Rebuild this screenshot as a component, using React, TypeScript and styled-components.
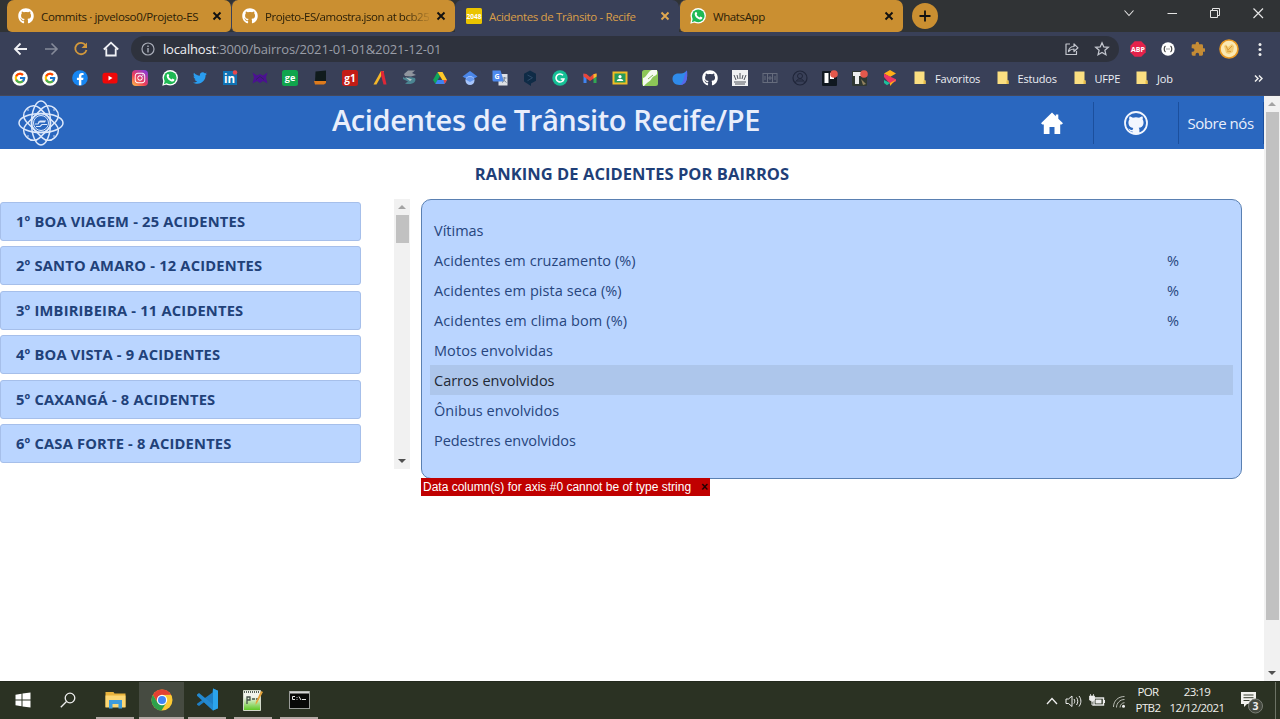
import React from "react";
import styled, { createGlobalStyle, css } from "styled-components";
import { FcGoogle } from "react-icons/fc";
import { FaGithub, FaTwitter, FaInstagram, FaFacebookF } from "react-icons/fa";

const ui = `"Open Sans", "Noto Sans", sans-serif`;
const amber = "#ca8f31";
const navy = "#394058";

const GlobalStyle = createGlobalStyle`
  * { box-sizing: border-box; }
  body { margin: 0; font-family: ${ui}; background: #fff; overflow: hidden; }
  svg { display: block; flex: none; }
`;

const Screen = styled.div`
  width: 1280px;
  height: 719px;
  display: flex;
  flex-direction: column;
  overflow: hidden;
`;

const Text = styled.span<{ $ls?: number }>`
  white-space: nowrap;
  letter-spacing: ${(p) => p.$ls ?? 0}px;
`;

/* ---------- browser chrome ---------- */

const TabStrip = styled.div`
  height: 32px;
  flex: none;
  display: flex;
  background: #303335;
  padding-left: 7px;
`;

const Tab = styled.div<{ $active?: boolean }>`
  width: 224px;
  height: 32px;
  padding: 0 9px 0 11px;
  display: flex;
  align-items: center;
  gap: 7px;
  font-size: 11.5px;
  border-radius: 7px 7px ${(p) => (p.$active ? "0 0" : "5px 5px")};
  background: ${(p) => (p.$active ? navy : amber)};
  color: ${(p) => (p.$active ? "#d99f49" : "#2b2008")};
  & + & { border-left: 1px solid ${(p) => (p.$active ? navy : "#a87526")}; padding-left: 10px; }
  svg:last-child { color: ${(p) => (p.$active ? "#e0a850" : "#111")}; }
`;

const TabTitle = styled(Text)<{ $fade?: boolean }>`
  flex: 1;
  min-width: 0;
  overflow: hidden;
  ${(p) => p.$fade && css`mask-image: linear-gradient(90deg, #000 85%, transparent 102%);`}
`;

const NewTab = styled.div`
  width: 26px;
  height: 26px;
  margin: 3px 0 0 9px;
  border-radius: 50%;
  background: ${amber};
  display: grid;
  place-items: center;
`;

const WindowButtons = styled.div`
  margin-left: auto;
  padding: 6px 15px 0 0;
  display: flex;
  gap: 29px;
  color: #e4e4e4;
  height: 21px;
`;

const Toolbar = styled.div`
  height: 33px;
  flex: none;
  background: ${navy};
  display: flex;
  align-items: center;
  padding: 1px 12px 0 13px;
`;

const NavIcons = styled.div`
  display: flex;
  gap: 14px;
  width: 118px;
`;

const Address = styled.div`
  width: 988px;
  height: 26px;
  border-radius: 13px;
  background: #2e323d;
  display: flex;
  align-items: center;
  padding: 0 9px 0 10px;
  color: #9a9ea8;
  font-size: 13px;
  b { font-weight: 400; color: #eef0f4; }
`;

const Url = styled(Text)`
  margin-left: 8px;
`;

const AddressIcons = styled.div`
  margin-left: auto;
  display: flex;
  gap: 14px;
  color: #c3c6ce;
`;

const Extensions = styled.div`
  margin-left: auto;
  display: flex;
  align-items: center;
  gap: 13.5px;
  padding-left: 1px;
`;

const Bookmarks = styled.div`
  height: 31px;
  flex: none;
  background: ${navy};
  border-bottom: 1px solid #45485a;
  display: flex;
  align-items: center;
  padding: 0 17px 4px 12px;
  gap: 14px;
`;

const BookmarkSlot = styled.div`
  width: 16px;
  height: 16px;
  flex: none;
  display: grid;
  place-items: center;
`;

const Folder = styled.div<{ $w: number }>`
  width: ${(p) => p.$w}px;
  flex: none;
  display: flex;
  align-items: center;
  gap: 9px;
  color: #eceef4;
  font-size: 11px;
`;

const Folders = styled.div`
  display: flex;
  padding-left: 2px;
  flex: 1;
`;

/* ---------- page ---------- */

const Viewport = styled.div`
  flex: 1;
  display: flex;
  min-height: 0;
`;

const Page = styled.main`
  width: 1264px;
  background: #fff;
`;

const Header = styled.header`
  height: 53px;
  background: #2a67bf;
  color: #e9eefb;
  display: flex;
  align-items: center;
`;

const LogoSlot = styled.div`
  width: 82px;
  padding-left: 18px;
`;

const Title = styled.h1`
  margin: 0 0 5px;
  width: 928px;
  text-align: center;
  font-size: 29px;
  line-height: 40px;
  font-weight: 650;
  letter-spacing: -0.4px;
  white-space: nowrap;
`;

const NavCell = styled.div<{ $w: number }>`
  width: ${(p) => p.$w}px;
  height: 42px;
  flex: none;
  display: flex;
  align-items: center;
  justify-content: center;
  border-right: 1px solid #1b4f9d;
  font-size: 15px;
  span { padding-right: 1px; }
`;

const Heading = styled.h2`
  margin: 0;
  height: 50px;
  line-height: 49px;
  text-align: center;
  font-size: 16.5px;
  font-weight: 700;
  color: #1f3f78;
  letter-spacing: 0.06px;
`;

const Content = styled.div`
  display: flex;
  align-items: flex-start;
`;

const List = styled.div`
  width: 394px;
  height: 269px;
  padding-top: 3px;
  display: flex;
  flex-direction: column;
  gap: 5.4px;
  overflow: hidden;
`;

const ListItem = styled.div`
  width: 361px;
  height: 39px;
  flex: none;
  border: 1px solid #a6bfea;
  border-radius: 3px;
  background: #bad5ff;
  color: #214179;
  font-size: 14.7px;
  font-weight: 700;
  line-height: 37px;
  padding-left: 15px;
`;

const Scrollbar = styled.div<{ $h: number }>`
  width: 16px;
  height: ${(p) => p.$h}px;
  flex: none;
  background: #f1f1f1;
  display: flex;
  flex-direction: column;
  align-items: center;
`;

const Thumb = styled.div<{ $h: number }>`
  width: 13px;
  height: ${(p) => p.$h}px;
  background: #c1c1c1;
`;

const Arrow = styled.div<{ $down?: boolean }>`
  height: 16px;
  display: flex;
  align-items: center;
  &::before {
    content: "";
    border: 4px solid transparent;
    ${(p) =>
      p.$down
        ? css`border-top-color: #505050; border-bottom: 0;`
        : css`border-bottom-color: #a3a3a3; border-top: 0;`}
  }
`;

const Spacer = styled.div`
  flex: 1;
`;

const Details = styled.section`
  margin-left: 11px;
`;

const Panel = styled.div`
  width: 821px;
  height: 280px;
  border: 1.5px solid #5a80b2;
  border-radius: 10px;
  background: #bad5ff;
  padding: 15px 8px;
`;

const Row = styled.div<{ $hover?: boolean }>`
  height: 30px;
  display: flex;
  align-items: center;
  justify-content: space-between;
  padding: 0 54px 0 4px;
  font-size: 14.5px;
  font-weight: 500;
  color: ${(p) => (p.$hover ? "#212936" : "#27457d")};
  background: ${(p) => (p.$hover ? "#adc6eb" : "transparent")};
`;

const ErrorTag = styled.div`
  width: 289px;
  height: 18px;
  margin-top: -1px;
  padding: 0 2px;
  display: flex;
  align-items: center;
  justify-content: space-between;
  background: #c00000;
  color: #fff;
  font: 12px "Liberation Sans", sans-serif;
  b { color: #200; font-size: 12px; line-height: 10px; }
`;

/* ---------- taskbar ---------- */

const Taskbar = styled.footer`
  height: 38px;
  flex: none;
  background: #2b3223;
  border-top: 1px solid #23291d;
  color: #f0f0ec;
  display: flex;
  font-size: 11.5px;
`;

const TaskButton = styled.div<{ $active?: boolean; $open?: boolean }>`
  width: ${(p) => (p.$active ? 45 : p.$open ? 38 : 45)}px;
  margin-right: ${(p) => (p.$active ? 4 : p.$open ? 8 : 0)}px;
  display: flex;
  align-items: center;
  justify-content: center;
  background: ${(p) => (p.$active ? "#464b41" : "transparent")};
  border-bottom: 2px solid ${(p) => (p.$open ? "#b3a9a5" : "transparent")};
`;

const Tasks = styled.div`
  display: flex;
  div:nth-child(3) { margin: 0 5px 0 6px; }
`;

const Tray = styled.div`
  margin-left: auto;
  padding-right: 4px;
  display: flex;
  align-items: center;
`;

const TrayIcons = styled.div`
  display: flex;
  gap: 7px;
  width: 89px;
`;

const TrayText = styled.div<{ $w: number }>`
  width: ${(p) => p.$w}px;
  text-align: center;
  line-height: 16px;
  white-space: nowrap;
  letter-spacing: -0.6px;
  padding-bottom: 1px;
`;

const NoticeSlot = styled.div`
  width: 36px;
  height: 37px;
  margin-left: 7px;
  border-right: 1px solid #6c7265;
  display: flex;
  align-items: center;
`;

/* ---------- icons ---------- */

const Svg = ({ s = 16, w, vb, children }: { s?: number; w?: number; vb?: string; children: React.ReactNode }) => (
  <svg width={w ?? s} height={s} viewBox={vb ?? `0 0 ${w ?? s} ${s}`} fill="none">
    {children}
  </svg>
);

const Close = () => (
  <Svg s={10}><path d="M1.5 1.5l7 7M8.5 1.5l-7 7" stroke="currentColor" strokeWidth="1.9" /></Svg>
);

const WhatsApp = () => (
  <Svg>
    <circle cx="8.2" cy="7.8" r="7.7" fill="#fff" /><path d="M.3 15.8l1-5 4 3.5z" fill="#fff" />
    <circle cx="8.2" cy="7.8" r="6.4" fill="#1fb954" /><path d="M1.9 14.2l1-4 3 2.6z" fill="#1fb954" />
    <path d="M5.4 4.3c.8-.7 1.3-.3 1.8 1.5l-.6 1c.7 1.3 1.5 2 2.8 2.6l1-.9 2 1c0 1.7-1.5 2.4-3 1.9C7 10.5 5 8.5 4.7 6.2c0-.8.2-1.4.7-1.9z" fill="#fff" />
  </Svg>
);

const GoogleDisc = () => (
  <Svg><circle cx="8" cy="8" r="7.8" fill="#fff" /><FcGoogle x="1.7" y="1.7" size={12.6} /></Svg>
);

const Sheet = ({ c }: { c: string }) => <rect width="16" height="16" rx="2.5" fill={c} />;

const TinyLabel = styled.text`
  font-family: ${ui};
  font-weight: 700;
  text-anchor: middle;
`;

const bookmarkIcons: React.ReactNode[] = [
  <GoogleDisc />,
  <GoogleDisc />,
  <Svg><circle cx="8" cy="8" r="7.8" fill="#1786f2" /><FaFacebookF x="2" y="3" size={12.5} color="#fff" /></Svg>,
  <Svg><rect x="0.5" y="2.7" width="15" height="10.8" rx="2.5" fill="#f00808" /><path d="M6.5 5.8v4.6l4-2.3z" fill="#fff" /></Svg>,
  <Svg>
    <defs><linearGradient id="insta" x1="0" y1="16" x2="13" y2="0" gradientUnits="userSpaceOnUse"><stop stopColor="#ffc94b" /><stop offset=".45" stopColor="#ee3e56" /><stop offset="1" stopColor="#8a3ad8" /></linearGradient></defs>
    <rect width="16" height="16" rx="4" fill="url(#insta)" /><FaInstagram x="2" y="2" size={12} color="#fff" />
  </Svg>,
  <WhatsApp />,
  <FaTwitter size={14} color="#2a9df0" />,
  <Svg><rect x="1" y="1" width="14" height="14" fill="#0f72b4" /><TinyLabel x="7.5" y="13" fontSize="11.5" fill="#fff">in</TinyLabel><circle cx="13" cy="2.5" r="2.3" fill="#e5484d" /></Svg>,
  <Svg><path d="M.5 2.5L5 5.5l3-1.500 3 1.500 4.500-3-1.500 5 1.500 6L11 11 8 13 5 11 .5 13.500l1.500-6z" fill="#4b1191" /><path d="M4 9.500l4-3 4 3" stroke="#31235f" /></Svg>,
  <Svg><Sheet c="#10a54d" /><TinyLabel x="8" y="11" fontSize="9" fill="#fff">ge</TinyLabel></Svg>,
  <Svg><path d="M3.5 1.5L14 .5V11l-11 1z" fill="#101b1c" /><path d="M2 11h12v2l-2 1.5H3z" fill="#dd7a1c" /></Svg>,
  <Svg><Sheet c="#c31c16" /><TinyLabel x="8" y="11.5" fontSize="10" fill="#fff">g1</TinyLabel></Svg>,
  <Svg><path d="M9 1L12 1 4.5 14.5H1.5z" fill="#f5b729" /><path d="M9 1h2.5l3 13.5H11.5L9 5z" fill="#df2736" /></Svg>,
  <Svg><path d="M2 4l4-3.500h7L10 3l4 2-5 1.500-6-.5z" fill="#90959e" /><path d="M1 7c4 2.500 5-1 12 1 2 4-3 7.500-10 5.500l3-2L1 9z" fill="#4b8592" /><path d="M3 7l7 2.500-2 1.500" fill="#b7c5cb" /></Svg>,
  <Svg><path d="M5.5 2L8 6 3.500 14 1 10z" fill="#0fa55c" /><path d="M5.500 2h5L15 10h-4.700z" fill="#ffc928" /><path d="M5.500 10H15l-2.500 4H3.300z" fill="#3f83f3" /><path d="M11.500 10H15l-2.300 4z" fill="#e8483b" /></Svg>,
  <Svg><path d="M8 1l7.500 5.500L8 11 .5 6.500z" fill="#4a86e8" /><circle cx="8" cy="10.500" r="4.500" fill="#a7c5fb" /><path d="M3.500 9.500a5 5 0 019 0L8 12z" fill="#6598ef" /></Svg>,
  <Svg><rect x="6.500" y="4" width="9" height="11.500" fill="#dde0e5" /><path d="M.5.5h8l3.500 11H2a1.500 1.500 0 01-1.500-1.500z" fill="#4d89ee" /><TinyLabel x="5" y="9" fontSize="7" fill="#fff">G</TinyLabel><path d="M10.500 8h4M12.500 7v1.500c0 2-1 3-2.500 4M11 9.500l3.500 3" stroke="#79889a" /></Svg>,
  <Svg><path d="M8 .5l6 3.300v7L9 13.500V16L2 11.500V3.800z" fill="#0f2b46" /><path d="M5.500 5l5 2.700-5 3" stroke="#2f4c6a" /></Svg>,
  <Svg><circle cx="8" cy="8" r="7.700" fill="#15bf95" /><path d="M11 5.300a4 4 0 10.9 3.700H8.700" stroke="#fff" strokeWidth="1.600" /></Svg>,
  <Svg><path d="M1.500 3.500V13h3V7.500z" fill="#4184f0" /><path d="M14.500 3.500V13h-3V7.500z" fill="#32a852" /><path d="M1.500 3.500L4.500 4 8 7l3.500-3 3-.5v3L8 11 1.500 6.500z" fill="#e8463b" /><path d="M11.500 4.200l3-.7v3l-3 2z" fill="#f9bb2d" /></Svg>,
  <Svg><rect x=".5" y="1.500" width="15" height="13" fill="#f2bd25" /><rect x="2.500" y="3.500" width="11" height="9" fill="#279b5c" /><circle cx="8" cy="6.700" r="1.600" fill="#fff" /><path d="M4.700 11c.6-3 6-3 6.600 0z" fill="#fff" /></Svg>,
  <Svg><Sheet c="#8cc657" /><path d="M1 8C5 7 6 1 10 0h5v4c-1 2-4 2-5 4-2 4-5 4-8 8H1z" fill="#f5faf0" /><path d="M6 9l5-4" stroke="#83b858" /></Svg>,
  <Svg><path d="M15 .5c.6 7.500.3 14.500-7.500 14.500C3 15 .5 12 .5 9c0-5 4-6 7.500-5.500C11 4 12.500 2.500 15 .5z" fill="#2f8bea" /><path d="M15 .5c.6 7.500.3 14.500-7.500 14.500C13 12 11 6 15 .5z" fill="#5867e8" /></Svg>,
  <FaGithub size={16} color="#fff" />,
  <Svg><rect width="16" height="16" fill="#f0f1f3" /><path d="M2 12h12M3 14h10M4 10L2 5M8 9V3M6 9L5 5M10 9l1-4M12 10l2-5" stroke="#50545d" /></Svg>,
  <Svg><rect x="1" y="3.500" width="14" height="9" stroke="#666c7d" /><path d="M5.500 4v8M10.500 4v8M3 6v4M8 6v4M13 6v4M6 8h4" stroke="#666c7d" /></Svg>,
  <Svg><circle cx="8" cy="8" r="7" stroke="#20263a" strokeWidth="1.200" /><circle cx="8" cy="6" r="2.500" stroke="#20263a" /><path d="M3.500 13c1-5.500 8-5.500 9 0M5 11h6" stroke="#20263a" /></Svg>,
  <Svg><rect y="1" width="15" height="15" rx="1" fill="#101820" /><path d="M2.500 3h4v10h-4zM8 3h4v6H8z" fill="#fff" /><circle cx="12" cy="4" r="3.800" fill="#e4584c" /></Svg>,
  <Svg><rect y="1" width="15" height="15" rx="1" fill="#303832" /><path d="M1 2h8v4H7v8H3V6H1z" fill="#eee" /><path d="M9 9l5 5-3 1z" fill="#92825f" /><circle cx="12" cy="4" r="3.800" fill="#e4584c" /></Svg>,
  <Svg><path d="M8 0l6 3.500L8 7 2 3.500z" fill="#ffae17" /><path d="M2 3.800l12 5.500v2L8 14 2 7z" fill="#ed3564" /><path d="M2 10l6 3-3 2.300L2 13z" fill="#1dbf9c" /><path d="M8 13l6-3.500-6 6.500z" fill="#ffae17" /></Svg>,
];

const FolderIcon = () => (
  <Svg w={12} s={14}><path d="M.5.5h10v9h1V13H.5z" fill="#fbdf81" /><path d="M9.500 9.500h2V13h-2z" fill="#e8bd45" /></Svg>
);

const Atom = () => (
  <Svg s={46} vb="-23 -23 46 46">
    <g stroke="#dce8fb" strokeWidth="1.500">
      <ellipse rx="22" ry="9.500" />
      <ellipse rx="9.500" ry="22" />
      <rect x="-20" y="-9.500" width="40" height="19" rx="8.500" transform="rotate(45)" />
      <rect x="-20" y="-9.500" width="40" height="19" rx="8.500" transform="rotate(-45)" />
      <circle r="9.500" /><circle r="7.500" strokeWidth="1" />
      <path d="M-6 1h3l2-3h6M-5 3.500h4l2-2h5M-3-1h7" strokeWidth="1.200" />
    </g>
    <g fill="#dce8fb"><circle cx="-13" cy="-13" r=".8" /><circle cx="13" cy="-13" r=".8" /><circle cx="-13" cy="13" r=".8" /><circle cx="13" cy="13" r=".8" /></g>
  </Svg>
);

const ranking = [
  "1º BOA VIAGEM - 25 ACIDENTES",
  "2º SANTO AMARO - 12 ACIDENTES",
  "3º IMBIRIBEIRA - 11 ACIDENTES",
  "4º BOA VISTA - 9 ACIDENTES",
  "5º CAXANGÁ - 8 ACIDENTES",
  "6º CASA FORTE - 8 ACIDENTES",
];

const stats: { label: string; value?: string; hover?: boolean; ls?: number }[] = [
  { label: "Vítimas" },
  { label: "Acidentes em cruzamento (%)", value: "%", ls: 0.05 },
  { label: "Acidentes em pista seca (%)", value: "%", ls: 0.07 },
  { label: "Acidentes em clima bom (%)", value: "%", ls: 0.13 },
  { label: "Motos envolvidas", ls: 0.08 },
  { label: "Carros envolvidos", hover: true },
  { label: "Ônibus envolvidos", ls: 0.05 },
  { label: "Pedestres envolvidos", ls: -0.05 },
];

const folders: [string, number][] = [["Favoritos", 82.5], ["Estudos", 77], ["UFPE", 62.5], ["Job", 60]];

const Browser = () => (
  <>
    <TabStrip>
      <Tab><FaGithub size={16} color="#fff" /><TabTitle $ls={-0.34}>Commits · jpveloso0/Projeto-ES</TabTitle><Close /></Tab>
      <Tab><FaGithub size={16} color="#fff" /><TabTitle $ls={-0.45} $fade>Projeto-ES/amostra.json at bcb25</TabTitle><Close /></Tab>
      <Tab $active>
        <Svg><rect width="16" height="16" rx="1.5" fill="#eac400" /><TinyLabel x="8" y="10.5" fontSize="6.5" fill="#fff">2048</TinyLabel></Svg>
        <TabTitle $ls={-0.37}>Acidentes de Trânsito - Recife</TabTitle><Close />
      </Tab>
      <Tab><WhatsApp /><TabTitle $ls={-0.4}>WhatsApp</TabTitle><Close /></Tab>
      <NewTab><Svg s={12}><path d="M6 .5v11M.5 6h11" stroke="#111" strokeWidth="1.8" /></Svg></NewTab>
      <WindowButtons>
        <Svg s={14}><path d="M2.500 4.500L7 9.500l4.500-5" stroke="currentColor" strokeWidth="1.100" /></Svg>
        <Svg s={14}><path d="M2.500 7.500h9.500" stroke="currentColor" /></Svg>
        <Svg s={14}><path d="M2.500 4.500h7v7h-7zM4.500 4.500v-2h7v7h-2" stroke="currentColor" /></Svg>
        <Svg s={14}><path d="M2.500 2.500l9.500 9.500M12 2.500L2.500 12" stroke="currentColor" strokeWidth="1.200" /></Svg>
      </WindowButtons>
    </TabStrip>
    <Toolbar>
      <NavIcons>
        <Svg><path d="M14 8H2.500M7.500 2.500L2 8l5.500 5.500" stroke="#f0f1f5" strokeWidth="1.800" /></Svg>
        <Svg><path d="M2 8h11.500M8.500 2.500L14 8l-5.500 5.500" stroke="#858a99" strokeWidth="1.600" /></Svg>
        <Svg><path d="M12.500 4A5.700 5.700 0 1013.500 9" stroke="#d2983c" strokeWidth="1.800" /><path d="M14 1.500V7H8.500z" fill="#d2983c" /></Svg>
        <Svg><path d="M.8 8.500L8 1.700l7.200 6.800M3.300 7.500v7h9.400v-7" stroke="#f0f1f5" strokeWidth="1.800" /></Svg>
      </NavIcons>
      <Address>
        <Svg s={14}><circle cx="7" cy="7" r="6" stroke="#a9adb8" strokeWidth="1.200" /><path d="M7 6v4.500M7 3.500V5" stroke="#a9adb8" strokeWidth="1.400" /></Svg>
        <Url $ls={-0.16}><b>localhost</b>:3000/bairros/2021-01-01&amp;2021-12-01</Url>
        <AddressIcons>
          <Svg><path d="M6 3H2v10.500h10.500V10M4.500 10.500c.5-3.500 2.500-5 5.500-5V2.800l4 4-4 3.700V8c-2.500 0-4 .8-5.500 2.500z" stroke="currentColor" strokeWidth="1.200" strokeLinejoin="round" /></Svg>
          <Svg><path d="M8 1.800l1.800 4.100 4.500.4-3.400 3 1 4.400L8 11.400l-3.900 2.300 1-4.400-3.400-3 4.500-.4z" stroke="currentColor" strokeWidth="1.300" /></Svg>
        </AddressIcons>
      </Address>
      <Extensions>
        <Svg><path d="M4.700.3h6.600l4.400 4.400v6.600l-4.400 4.400H4.700L.3 11.300V4.700z" fill="#e4224b" /><TinyLabel x="8" y="10.700" fontSize="7" fill="#fff">ABP</TinyLabel></Svg>
        <Svg><circle cx="8" cy="8" r="6.700" fill="#fff" /><path d="M5.500 5C3.800 6 3.800 10 5.500 11M10.500 5c1.700 1 1.700 5 0 6M6.500 8h1M8.500 8h1" stroke="#444" strokeWidth="1.200" /></Svg>
        <Svg vb="0 0 24 24"><path fill="#c58c35" d="M20.500 11H19V7a2 2 0 00-2-2h-4V3.500a2.500 2.500 0 00-5 0V5H4a2 2 0 00-2 2v3.800h1.500a2.700 2.700 0 010 5.400H2V20a2 2 0 002 2h3.800v-1.500a2.700 2.700 0 015.400 0V22H17a2 2 0 002-2v-4h1.500a2.500 2.500 0 000-5z" transform="translate(2 0)" /></Svg>
        <Svg s={20}><circle cx="10" cy="10" r="9" fill="#fbe9b2" stroke="#e99a22" strokeWidth="1.600" /><path d="M5 7l2-1.500L9 8l4-3 2 2-1 6-4 2-3-1z" fill="#f2ca70" /><path d="M7 7l2 4 4-4M8 12l4 .5" stroke="#d99a35" /></Svg>
        <Svg><circle cx="8" cy="3.500" r="1.500" fill="#eee" /><circle cx="8" cy="8.500" r="1.500" fill="#eee" /><circle cx="8" cy="13.500" r="1.500" fill="#eee" /></Svg>
      </Extensions>
    </Toolbar>
    <Bookmarks>
      {bookmarkIcons.map((icon, i) => <BookmarkSlot key={i}>{icon}</BookmarkSlot>)}
      <Folders>
        {folders.map(([name, w]) => <Folder key={name} $w={w}><FolderIcon /><Text $ls={-0.2}>{name}</Text></Folder>)}
      </Folders>
      <Svg s={9}><path d="M1 1.500l3 3-3 3M5 1.500l3 3-3 3" stroke="#eee" strokeWidth="1.500" /></Svg>
    </Bookmarks>
  </>
);

export default function App() {
  return (
    <Screen>
      <GlobalStyle />
      <Browser />
      <Viewport>
        <Page>
          <Header>
            <LogoSlot><Atom /></LogoSlot>
            <Title>Acidentes de Trânsito Recife/PE</Title>
            <NavCell $w={84}><Svg w={22} s={22}><path d="M11 .5l3.800 3.800V2.500h2.500V6.700L22 11.200l-1.400 1.300h-1.400V22h-5.700v-7h-5v7H2.800v-9.500H1.400L0 11.200z" fill="#fff" /></Svg></NavCell>
            <NavCell $w={85}>
              <Svg s={24}>
                <circle cx="12" cy="12" r="11" stroke="#f2f6fe" strokeWidth="1.800" />
                <path d="M5.500 5.500c1.300 0 2.500.6 3.300 1.300a12 12 0 016.400 0c.8-.7 2-1.300 3.300-1.300.5 1.200.4 2.200.1 3 1 1.200 1.100 3 .8 4.500-.5 2.500-2 3.500-4.700 3.800.5.600.7 1.200.7 2v3.500a11 11 0 01-6.800 0v-1.800c-2 .4-2.700-.5-3.200-1.500-.3-.6-.7-.9-1.200-1.300 1.800-.5 2.200 1.700 4.400 1.200 0-.8.200-1.500.7-2C6.500 16.500 5 15.500 4.600 13c-.3-1.500-.2-3.300.8-4.500-.3-.8-.4-1.800.1-3z" fill="#f2f6fe" />
              </Svg>
            </NavCell>
            <NavCell $w={85}><Text $ls={-0.45}>Sobre nós</Text></NavCell>
          </Header>
          <Heading>RANKING DE ACIDENTES POR BAIRROS</Heading>
          <Content>
            <List>{ranking.map((r) => <ListItem key={r}><Text $ls={0.19}>{r}</Text></ListItem>)}</List>
            <Scrollbar $h={270}><Arrow /><Thumb $h={28} /><Spacer /><Arrow $down /></Scrollbar>
            <Details>
              <Panel>
                {stats.map((s) => (
                  <Row key={s.label} $hover={s.hover}><Text $ls={s.ls}>{s.label}</Text><span>{s.value}</span></Row>
                ))}
              </Panel>
              <ErrorTag><Text>Data column(s) for axis #0 cannot be of type string</Text><b>×</b></ErrorTag>
            </Details>
          </Content>
        </Page>
        <Scrollbar $h={585}><Arrow /><Thumb $h={508} /><Spacer /><Arrow $down /></Scrollbar>
      </Viewport>
      <Taskbar>
        <Tasks>
          <TaskButton><Svg><path d="M.5 2.700L6.500 1.700V7.500h-6zM7.500 1.500L15.500.5v7h-8zM.5 8.500h6v5.800l-6-1zM7.500 8.500h8v7l-8-1z" fill="#fff" /></Svg></TaskButton>
          <TaskButton><Svg><circle cx="10" cy="6" r="4.800" stroke="#eee" strokeWidth="1.300" /><path d="M6.500 9.500L.8 15.200" stroke="#eee" strokeWidth="1.300" /></Svg></TaskButton>
          <TaskButton $open>
            <Svg w={21} s={18}><path d="M.5 1h8l1 1.500h11V16H.5z" fill="#e9b33d" /><path d="M.5 4.500h20v12H.5z" fill="#fbd775" /><path d="M4 9h13v8.500h-3.500V13h-6v4.500H4z" fill="#3d9bdc" /></Svg>
          </TaskButton>
          <TaskButton $active $open>
            <Svg s={22}>
              <circle cx="11" cy="11" r="10.500" fill="#fcc934" />
              <path d="M1.900 5.750A10.500 10.500 0 0120.100 5.750L11 6 6.500 13.500z" fill="#e34133" />
              <path d="M1.900 5.750A10.500 10.500 0 0010.500 21.500L15.500 13.500H6.500z" fill="#2da14c" />
              <circle cx="11" cy="11" r="5.200" fill="#fff" /><circle cx="11" cy="11" r="4" fill="#4285f4" />
            </Svg>
          </TaskButton>
          <TaskButton $open>
            <Svg s={23}><path d="M17 .5l5 2.200v17.600l-5 2.200L8 14.200l-5 3.800-2-1.200v-1L16.500 4.500z" fill="#1f7fc5" /><path d="M1 6.500l2-1.500L17 16.500V22.500L1 7.800z" fill="#2489cf" /><path d="M17 .5l5 2.200v17.600l-5 2.200z" fill="#2ba4ec" /></Svg>
          </TaskButton>
          <TaskButton $open>
            <Svg s={22}><defs><linearGradient id="npp" x1="0" y1="2" x2="0" y2="22" gradientUnits="userSpaceOnUse"><stop offset=".3" stopColor="#f1f4ec" /><stop offset="1" stopColor="#55c516" /></linearGradient></defs><path d="M1.500 1.500h17v20h-17z" fill="url(#npp)" stroke="#d2d8ca" /><path d="M2 3h16" stroke="#58635a" strokeDasharray="1 1" strokeWidth="2" /><path d="M5 15V8h3v3H5M10 10h3M14 10h3" stroke="#46524a" strokeWidth="1.300" /><path d="M21 3l-6 11-1.500 2 .3-3L19 2z" fill="#e5a33b" /></Svg>
          </TaskButton>
          <TaskButton $open>
            <Svg w={21} s={18}><rect x=".5" y=".5" width="20" height="17" fill="#080808" stroke="#9a9c99" /><path d="M1 1.500h19" stroke="#d5d5d5" strokeWidth="2" /><path d="M6 5.500H3.500v3H6M8 6v.8M8 8v.8M10 5.500l2 3.500M13 8.500h4" stroke="#e6e6e6" /></Svg>
          </TaskButton>
        </Tasks>
        <Tray>
          <TrayIcons>
            <Svg w={12}><path d="M1 11l5-5.500 5 5.500" stroke="#eee" strokeWidth="1.300" /></Svg>
            <Svg w={17}><path d="M1 6h2.500L7 3v10.500L3.500 10.500H1zM9 6c1 1.500 1 3 0 4.500M11.500 4.500c1.700 2.500 1.700 5 0 7.500M14 3c2.500 3.300 2.500 7 0 10.500" stroke="#eee" /></Svg>
            <Svg w={16}><rect x="5" y="5" width="9.500" height="7" stroke="#eee" strokeWidth="1.400" /><path d="M6.500 6.500h6v4h-6z" fill="#eee" /><path d="M15.500 7v3M3 8v4h2" stroke="#eee" /><path d="M.5 3h5v4l-2 1.500-3-1.500zM1.500 1v2M4.500 1v2" fill="#eee" stroke="#eee" strokeWidth=".7" /></Svg>
            <Svg w={14}><path d="M1.500 14C1.500 8 6 3.500 12.500 3.500M4.500 14.500c0-4.500 3.500-8 8-8M8 14.500c0-2.500 2-4.800 4.500-4.800" stroke="#b9bcb4" /><circle cx="11.500" cy="13.300" r="1.500" fill="#eee" /></Svg>
          </TrayIcons>
          <TrayText $w={26}>POR<br />PTB2</TrayText>
          <TrayText $w={72}>23:19<br />12/12/2021</TrayText>
          <NoticeSlot>
            <Svg w={26} s={26}><path d="M1 4h15v12H7l-3 3v-3H1z" fill="#f2f2ee" /><path d="M3.500 7h10M3.500 9.700h10M3.500 12.500h6" stroke="#3a4032" /><circle cx="15.500" cy="18" r="7" fill="#43483e" stroke="#7a7e75" /><TinyLabel x="15.500" y="22" fontSize="10.500" fill="#eee">3</TinyLabel></Svg>
          </NoticeSlot>
        </Tray>
      </Taskbar>
    </Screen>
  );
}
